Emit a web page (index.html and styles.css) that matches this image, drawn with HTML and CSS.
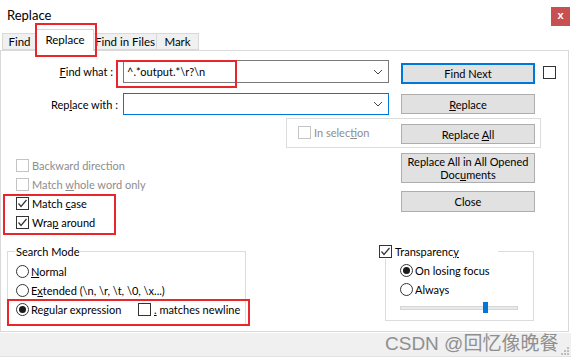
FILE: index.html
```html
<!DOCTYPE html>
<html>
<head>
<meta charset="utf-8">
<title>Replace</title>
<link rel="stylesheet" href="styles.css">
</head>
<body>
<div class="dialog">
	<div class="titleBar">
		<span class="title">Replace</span>
		<span class="closeBtn">x</span>
	</div>

	<div class="tabs">
		<span class="tab tabFind">Find</span>
		<span class="tab tabActive">Replace</span>
		<span class="tab tabFiles">Find in Files</span>
		<span class="tab tabMark">Mark</span>
	</div>

	<div class="panel">
		<div class="row rowFind">
			<span class="fieldLabel findLabel"><u>F</u>ind what :</span>
			<div class="combo">
				<span class="comboText">^.*output.*\r?\n</span>
				<svg class="chevron" width="10" height="6" viewBox="0 0 10 6"><polyline points="1,1 5,5 9,1" fill="none" stroke="#444" stroke-width="1"/></svg>
			</div>
			<button class="btn btnDefault">Find Next</button>
			<span class="cb sideCheck"></span>
		</div>

		<div class="row rowReplace">
			<span class="fieldLabel">Rep<u>l</u>ace with :</span>
			<div class="combo comboFocus">
				<span class="comboText"></span>
				<svg class="chevron" width="10" height="6" viewBox="0 0 10 6"><polyline points="1,1 5,5 9,1" fill="none" stroke="#444" stroke-width="1"/></svg>
			</div>
			<button class="btn btnReplace"><u>R</u>eplace</button>
		</div>

		<div class="row rowSelection">
			<div class="selectionBox">
				<span class="option optionOff selOption"><span class="cb cbOff"></span><span>In selec<u>t</u>ion</span></span>
				<button class="btn btnAll">Replace <u>A</u>ll</button>
			</div>
		</div>

		<div class="row rowOptions">
			<div class="optionList">
				<span class="option optionOff"><span class="cb cbOff"></span><span>Backward direction</span></span>
				<span class="option optionOff"><span class="cb cbOff"></span><span>Match <u>w</u>hole word only</span></span>
				<span class="option"><span class="cb"><svg width="11" height="11" viewBox="0 0 11 11"><polyline points="1.5,5.5 4,8.5 9.5,2" fill="none" stroke="#333" stroke-width="1.2"/></svg></span><span>Match <u>c</u>ase</span></span>
				<span class="option"><span class="cb"><svg width="11" height="11" viewBox="0 0 11 11"><polyline points="1.5,5.5 4,8.5 9.5,2" fill="none" stroke="#333" stroke-width="1.2"/></svg></span><span>Wra<u>p</u> around</span></span>
			</div>
			<div class="buttonColumn">
				<button class="btn btnTall">Replace All in All Opened<br>Doc<u>u</u>ments</button>
				<button class="btn btnClose">Close</button>
			</div>
		</div>

		<div class="row rowGroups">
			<fieldset class="group searchMode">
				<legend>Search Mode</legend>
				<span class="option"><span class="rb"></span><span><u>N</u>ormal</span></span>
				<span class="option"><span class="rb"></span><span>E<u>x</u>tended (\n, \r, \t, \0, \x...)</span></span>
				<span class="option">
					<span class="regexLabel"><span class="rb rbOn"></span><span>Re<u>g</u>ular expression</span></span>
					<span class="cb"></span><span><u>.</u> matches newline</span>
				</span>
			</fieldset>

			<fieldset class="group transparency">
				<legend><span class="cb"><svg width="11" height="11" viewBox="0 0 11 11"><polyline points="1.5,5.5 4,8.5 9.5,2" fill="none" stroke="#333" stroke-width="1.2"/></svg></span><span>Transparenc<u>y</u></span></legend>
				<span class="option"><span class="rb rbOn"></span><span>On losing focus</span></span>
				<span class="option"><span class="rb"></span><span>Always</span></span>
				<div class="slider"><span class="sliderThumb"></span></div>
			</fieldset>
		</div>
	</div>

	<div class="statusBar"></div>

	<span class="mark markTab"></span>
	<span class="mark markFind"></span>
	<span class="mark markCase"></span>
	<span class="mark markRegex"></span>

	<span class="watermark">CSDN @回忆像晚餐</span>
	<svg class="grip" width="8" height="8" viewBox="0 0 8 8">
		<rect x="6" y="0" width="2" height="2" fill="#bdbdbd"/>
		<rect x="3" y="3" width="2" height="2" fill="#bdbdbd"/>
		<rect x="6" y="3" width="2" height="2" fill="#bdbdbd"/>
		<rect x="0" y="6" width="2" height="2" fill="#bdbdbd"/>
		<rect x="3" y="6" width="2" height="2" fill="#bdbdbd"/>
		<rect x="6" y="6" width="2" height="2" fill="#bdbdbd"/>
	</svg>
</div>
</body>
</html>
```

FILE: styles.css
```css
* {
	box-sizing: border-box;
}

body {
	margin: 0;
	background: #fff;
	font-family: Lato, "Liberation Sans", sans-serif;
	font-size: 11px;
	color: #000;
}

.dialog {
	position: relative;
	width: 571px;
	height: 357px;
	overflow: hidden;
}

/* title bar */

.titleBar {
	display: flex;
	height: 29px;
}

.title {
	padding: 8px 0 0 7px;
	font-size: 13px;
	line-height: 15px;
}

.closeBtn {
	width: 19px;
	height: 19px;
	margin: 7px 1px 0 auto;
	background: #c75050;
	color: #fff;
	font-family: "Liberation Sans", sans-serif;
	font-size: 11px;
	font-weight: bold;
	line-height: 17px;
	text-align: center;
}

/* tabs */

.tabs {
	display: flex;
	align-items: flex-end;
	height: 21px;
	padding-left: 2px;
	position: relative;
	z-index: 1;
}

.tab {
	height: 17px;
	margin-right: -1px;
	border: 1px solid #d9d9d9;
	background: #f0f0f0;
	font-size: 11.5px;
	line-height: 15px;
	text-align: center;
}

.tabFind { width: 35px; }
.tabFiles { width: 64px; }
.tabMark { width: 43px; }

.tabActive {
	width: 58px;
	height: 22px;
	margin-bottom: -1px;
	border-bottom: none;
	background: #fff;
	line-height: 20px;
	position: relative;
	z-index: 2;
}

/* panel */

.panel {
	width: 569px;
	height: 282px;
	border: 1px solid #d9d9d9;
	padding-top: 9px;
}

.row {
	display: flex;
}

.fieldLabel {
	width: 117px;
	margin-right: 5px;
	text-align: right;
	line-height: 23px;
}

.findLabel {
	padding-right: 5px;
}

.combo {
	display: flex;
	align-items: center;
	width: 266px;
	height: 23px;
	border: 1px solid #7a7a7a;
	padding: 0 3px;
}

.comboFocus {
	height: 22px;
	border-color: #0078d7;
}

.comboText {
	flex: 1;
}

.chevron {
	margin-right: 2px;
}

.btn {
	width: 134px;
	height: 21px;
	margin: 0 0 0 12px;
	padding: 0;
	border: 1px solid #adadad;
	background: #e1e1e1;
	font: inherit;
	color: #000;
	line-height: 13px;
}

.btnDefault {
	margin-top: 3px;
	border: 2px solid #0078d7;
}

.sideCheck {
	margin: 6px 0 0 8px;
}

.rowReplace {
	height: 22px;
	margin-top: 9px;
}

.btnReplace {
	height: 20px;
	margin-top: 1px;
}

/* in selection group */

.rowSelection {
	margin-top: 3px;
}

.selectionBox {
	display: flex;
	width: 255px;
	height: 30px;
	margin-left: 285px;
	border: 1px solid #dcdcdc;
}

.selOption {
	margin: 4px 0 0 11px;
}

.btnAll {
	height: 20px;
	margin: 5px 5px 0 auto;
}

/* checkboxes and radios */

.option {
	display: flex;
	align-items: center;
	height: 19px;
	white-space: nowrap;
}

.optionOff {
	color: #8d8d8d;
}

.cb {
	display: inline-flex;
	align-items: center;
	justify-content: center;
	flex: none;
	width: 13px;
	height: 13px;
	margin-right: 3px;
	border: 1px solid #333;
	background: #fff;
}

.cbOff {
	border-color: #c4c4c4;
}

.rb {
	display: inline-flex;
	align-items: center;
	justify-content: center;
	flex: none;
	width: 13px;
	height: 13px;
	margin-right: 2px;
	border: 1px solid #333;
	border-radius: 50%;
	background: #fff;
}

.rbOn::after {
	content: "";
	width: 7px;
	height: 7px;
	border-radius: 50%;
	background: #1a1a1a;
}

/* options + side buttons */

.optionList {
	width: 400px;
	padding: 8px 0 0 15px;
}

.buttonColumn {
	display: flex;
	flex-direction: column;
}

.buttonColumn .btn {
	margin-left: 0;
}

.btnTall {
	height: 30px;
	margin-top: 5px !important;
}

.btnClose {
	margin-top: 8px !important;
}

/* group boxes */

.rowGroups {
	margin-top: 12px;
	align-items: flex-start;
}

.group {
	min-width: 0;
	margin: 0;
	padding: 0 8px;
	border: 1px solid #dcdcdc;
}

.group legend {
	padding: 0 1px;
	margin-left: -1px;
	line-height: 15px;
}

.searchMode {
	width: 239px;
	height: 81px;
	margin-left: 6px;
	padding-top: 3px;
}

.regexLabel {
	display: flex;
	align-items: center;
	flex: none;
	width: 122px;
}

.transparency {
	width: 149px;
	height: 77px;
	margin-left: 139px;
	padding: 2px 0 0 14px;
}

.transparency legend {
	display: flex;
	align-items: center;
	width: 119px;
	margin-left: -21px;
	padding: 0;
}

.slider {
	position: relative;
	width: 118px;
	height: 4px;
	margin-top: 7px;
	border: 1px solid #d6d6d6;
	background: #e7eaea;
}

.sliderThumb {
	position: absolute;
	left: 82px;
	top: -5px;
	width: 5px;
	height: 11px;
	background: #0078d7;
}

/* bottom strip */

.statusBar {
	height: 24px;
	margin-top: 1px;
	background: #f0f0f0;
	border-bottom: 1px solid #e2e2e2;
}

/* red annotation boxes drawn over the dialog */

.mark {
	position: absolute;
	border: 2px solid #e8262b;
	z-index: 5;
}

.markTab { left: 35px; top: 23px; width: 62px; height: 34px; }
.markFind { left: 116px; top: 60px; width: 121px; height: 28px; }
.markCase { left: 3px; top: 194px; width: 113px; height: 41px; }
.markRegex { left: 7px; top: 299px; width: 243px; height: 27px; }

.watermark {
	position: absolute;
	left: 385px;
	top: 328px;
	font-family: "Liberation Sans", "Noto Sans CJK SC", sans-serif;
	font-size: 19px;
	color: #8f8f8f;
	white-space: nowrap;
	z-index: 6;
}

.grip {
	position: absolute;
	right: 2px;
	bottom: 2px;
}
```
